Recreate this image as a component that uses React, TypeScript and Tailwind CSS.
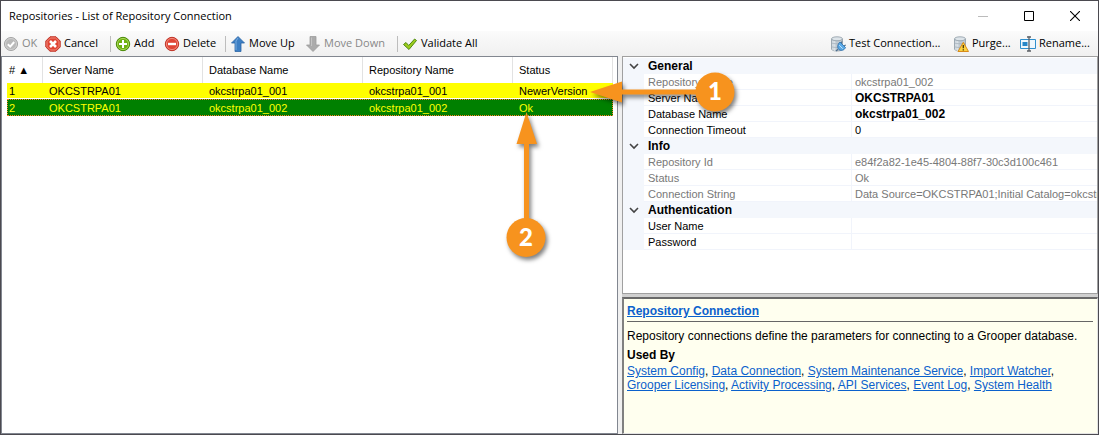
import type { ReactNode } from "react";

const OkIcon = () => (
  <svg width="16" height="16" viewBox="0 0 16 16">
    <circle cx="8" cy="8" r="6.5" fill="#b9b9b9" stroke="#a3a3a3" />
    <circle cx="8" cy="8" r="5.5" fill="none" stroke="#d2d2d2" />
    <path d="M4.8 8.2l2.4 2.4 4-4.6" fill="none" stroke="#fff" strokeWidth="2" />
  </svg>
);

const CancelIcon = () => (
  <svg width="16" height="16" viewBox="0 0 16 16">
    <path d="M5 .8h6L15.200 5v6L11 15.200H5L.8 11V5z" fill="#e04434" stroke="#bf3427" />
    <path d="M5.400 2h5.200L14 5.400v5.200L10.600 14H5.400L2 10.600V5.400z" fill="none" stroke="#f08a7c" />
    <path d="M5 5l6 6M11 5l-6 6" stroke="#fff" strokeWidth="2.600" />
  </svg>
);

const AddIcon = () => (
  <svg width="16" height="16" viewBox="0 0 16 16">
    <circle cx="8" cy="8" r="6.700" fill="#6fb010" stroke="#4a8a08" />
    <circle cx="8" cy="8" r="5.600" fill="none" stroke="#a9d65a" />
    <path d="M8 4v8M4 8h8" stroke="#fff" strokeWidth="2" />
  </svg>
);

const DeleteIcon = () => (
  <svg width="16" height="16" viewBox="0 0 16 16">
    <circle cx="8" cy="8" r="6.700" fill="#e04434" stroke="#bf3427" />
    <circle cx="8" cy="8" r="5.600" fill="none" stroke="#f08a7c" />
    <path d="M4 8h8" stroke="#fff" strokeWidth="2.400" />
  </svg>
);

const UpIcon = () => (
  <svg width="16" height="16" viewBox="0 0 16 16">
    <path d="M8 .5L14.500 7H11v8.500H5V7H1.500z" fill="#3d7fc4" stroke="#2b66a6" strokeWidth=".8" />
    <path d="M8 2L6 5v9" fill="none" stroke="#79acdf" />
  </svg>
);

const DownIcon = () => (
  <svg width="16" height="16" viewBox="0 0 16 16">
    <path d="M8 15.500L1.500 9H5V.5h6V9h3.500z" fill="#ababab" stroke="#9d9d9d" strokeWidth=".8" />
    <path d="M6.500 1.500V10" fill="none" stroke="#c4c4c4" />
  </svg>
);

const ValidateIcon = () => (
  <svg width="16" height="16" viewBox="0 0 16 16">
    <path d="M1.500 8.500L4 6.500l2.700 3L12.600 3l1.900 1.500L7 13.500z" fill="#9ccc1e" stroke="#4f8a10" />
  </svg>
);

const Database = () => (
  <>
    <path d="M1.500 3v10c0 1.300 2.500 2 5.500 2s5.500-.7 5.500-2V3" fill="#bfc9d1" stroke="#8d9aa5" strokeWidth=".8" />
    <path d="M3 4.500v10M4.800 5v10" stroke="#e6ebef" />
    <path d="M1.500 6.800c1 1.300 10 1.300 11 0M1.500 10.500c1 1.300 10 1.300 11 0" fill="none" stroke="#a3afb9" strokeWidth=".8" />
    <ellipse cx="7" cy="2.800" rx="5.500" ry="2" fill="#dde4e9" stroke="#8d9aa5" strokeWidth=".8" />
  </>
);

const TestIcon = () => (
  <svg width="16" height="16" viewBox="0 0 16 16">
    <Database />
    <path d="M6 15l2-1.800M12 5.500l-1 2M15.800 9l-2 1" stroke="#4d6f8f" strokeWidth="1.200" />
    <path d="M10 6l5.500 5.500c-1.200 2.800-4.100 3.600-6.400 2.200C7 12 7.300 8.300 10 6z" fill="#5aa9e6" stroke="#2b6ca8" strokeWidth=".8" />
    <path d="M9.200 9.200l3.500 3.500" stroke="#c5e2f8" />
  </svg>
);

const PurgeIcon = () => (
  <svg width="16" height="16" viewBox="0 0 16 16">
    <Database />
    <path d="M10.300 6.300l5.200 9.200H5z" fill="#fbd340" stroke="#d98b18" strokeLinejoin="round" />
    <path d="M10.300 9v3.300M10.300 13.300v1.300" stroke="#4a3508" strokeWidth="1.300" />
  </svg>
);

const RenameIcon = () => (
  <svg width="16" height="16" viewBox="0 0 16 16">
    <path d="M.5 3.500h15v9H.5z" fill="#eef7fd" stroke="#2f8fcd" />
    <path d="M2.500 6h5v4h-5z" fill="#2586c8" />
    <path d="M7 1h1.500L9 1.500 9.500 1H11M9 1.500v13M7 15h1.500l.5-.5.5.5H11" fill="none" stroke="#5b6066" strokeWidth="1.300" />
  </svg>
);

interface ToolButtonProps {
  icon: ReactNode;
  label: string;
  css?: string;
  disabled?: boolean;
}

const ToolButton = ({ icon, label, css = "", disabled }: ToolButtonProps) => (
  <button
    type="button"
    disabled={disabled}
    className={`flex shrink-0 items-center gap-[3px] whitespace-nowrap disabled:text-[#888] ${css}`}
  >
    {icon}
    <span>{label}</span>
  </button>
);

const Separator = () => <div className="mr-1 h-4 w-px shrink-0 bg-[#bdbdbd]" />;

const rows = [
  { id: 1, server: "OKCSTRPA01", database: "okcstrpa01_001", repository: "okcstrpa01_001", status: "NewerVersion" },
  { id: 2, server: "OKCSTRPA01", database: "okcstrpa01_002", repository: "okcstrpa01_002", status: "Ok" },
];

const RepositoryList = () => (
  <section className="min-w-0 grow basis-0 overflow-hidden border border-[#828790] bg-white pl-[5px]">
    <table className="w-[606px] table-fixed border-separate border-spacing-0 text-left text-[11px] leading-[14px]">
      <colgroup>
        <col className="w-[36px]" />
        <col className="w-[160px]" />
        <col className="w-[160px]" />
        <col className="w-[150px]" />
        <col className="w-[100px]" />
      </colgroup>
      <thead>
        <tr className="h-[26px] [&>th]:border-r [&>th]:border-[#e2e2e2] [&>th]:pl-[6px] [&>th]:font-normal">
          <th className="!pl-[2px]"># ▲</th>
          <th>Server Name</th>
          <th>Database Name</th>
          <th>Repository Name</th>
          <th>Status</th>
        </tr>
      </thead>
      <tbody>
        {rows.map((row) => (
          <tr
            key={row.id}
            className={
              row.id === 2
                ? "h-[17px] bg-[#008000] text-[#ffff00] outline-1 -outline-offset-1 outline-dotted outline-[#ff7f27] [&>td]:pl-[6px]"
                : "h-[16px] bg-[#ffff00] [&>td]:border-b [&>td]:border-white [&>td]:pl-[6px]"
            }
          >
            <td className="!pl-[2px]">{row.id}</td>
            <td>{row.server}</td>
            <td>{row.database}</td>
            <td>{row.repository}</td>
            <td>{row.status}</td>
          </tr>
        ))}
      </tbody>
    </table>
  </section>
);

interface Property {
  name: string;
  value: string;
  readOnly?: boolean;
  changed?: boolean;
}

const categories: { title: string; properties: Property[] }[] = [
  {
    title: "General",
    properties: [
      { name: "Repository Name", value: "okcstrpa01_002", readOnly: true },
      { name: "Server Name", value: "OKCSTRPA01", changed: true },
      { name: "Database Name", value: "okcstrpa01_002", changed: true },
      { name: "Connection Timeout", value: "0" },
    ],
  },
  {
    title: "Info",
    properties: [
      { name: "Repository Id", value: "e84f2a82-1e45-4804-88f7-30c3d100c461", readOnly: true },
      { name: "Status", value: "Ok", readOnly: true },
      {
        name: "Connection String",
        value: "Data Source=OKCSTRPA01;Initial Catalog=okcstrpa01_002",
        readOnly: true,
      },
    ],
  },
  {
    title: "Authentication",
    properties: [
      { name: "User Name", value: "" },
      { name: "Password", value: "" },
    ],
  },
];

const PropertyGrid = () => (
  <section className="h-[238px] overflow-hidden border border-[#a0a0a0] bg-white pt-px">
    <table className="w-full table-fixed border-separate border-spacing-0 text-left text-[11px] leading-[14px]">
      <colgroup>
        <col className="w-[21px]" />
        <col className="w-[208px]" />
        <col />
      </colgroup>
      {categories.map((category) => (
        <tbody key={category.title}>
          <tr className="h-[16px] bg-[#f4f7fc]">
            <td>
              <button type="button" aria-label={`Collapse ${category.title}`} className="flex w-full justify-center">
                <svg width="10" height="8" viewBox="0 0 10 8">
                  <path d="M1 2l4 4 4-4" fill="none" stroke="#444" strokeWidth="1.600" />
                </svg>
              </button>
            </td>
            <th colSpan={2} className="pl-1 text-[12px] font-bold">
              {category.title}
            </th>
          </tr>
          {category.properties.map((property) => (
            <tr
              key={property.name}
              className={property.readOnly ? "h-[16px] text-[#787878]" : "h-[16px]"}
            >
              <td className="bg-[#f4f7fc]" />
              <th className="border-r border-b border-[#f1f4fb] pl-1 font-normal">{property.name}</th>
              <td
                className={`overflow-hidden border-b border-[#f1f4fb] pl-[3px] whitespace-nowrap ${
                  property.changed ? "text-[12px] font-bold" : ""
                }`}
              >
                {property.value}
              </td>
            </tr>
          ))}
        </tbody>
      ))}
    </table>
  </section>
);

const usedBy = [
  "System Config",
  "Data Connection",
  "System Maintenance Service",
  "Import Watcher",
  "Grooper Licensing",
  "Activity Processing",
  "API Services",
  "Event Log",
  "System Health",
];

const HelpPanel = () => (
  <section className="grow border-t-2 border-r border-b border-l-2 border-t-[#696969] border-r-[#e3e3e3] border-b-[#e3e3e3] border-l-[#808080] bg-[#ffffef] px-[3px] text-[12px] leading-[14px]">
    <h2 className="mr-px border-b border-[#666] pt-[5px] pb-[3px] font-bold text-[#0b61cc]">
      <a href="#repository-connection" className="underline">
        Repository Connection
      </a>
    </h2>
    <p className="mt-[7px]">
      Repository connections define the parameters for connecting to a Grooper database.
    </p>
    <h3 className="mt-[5px] font-bold">Used By</h3>
    <p className="mt-[2px]">
      {usedBy.map((name, index) => (
        <span key={name}>
          <a href="#used-by" className="text-[#0b61cc] underline">
            {name}
          </a>
          {index < usedBy.length - 1 ? ", " : ""}
        </span>
      ))}
    </p>
  </section>
);

const Callouts = () => (
  <div className="pointer-events-none absolute -top-px -left-px">
    <svg
      width="750"
      height="270"
      viewBox="0 0 750 270"
      className="drop-shadow-[2px_3px_2px_rgba(0,0,0,0.5)]"
    >
      <g fill="#f7931e">
        <path d="M590 92l32-10.500v8h80v5h-80v8z" />
        <path d="M526.500 112l10.500 32h-8v80h-5v-80h-7.500z" />
        <circle cx="715" cy="92" r="19.500" />
        <circle cx="526" cy="237.500" r="19.500" />
      </g>
    </svg>
    <span className="absolute top-[76px] left-[695px] w-10 text-center font-['Lato'] text-[24px] leading-[30px] font-black text-white">
      1
    </span>
    <span className="absolute top-[222px] left-[506px] w-10 text-center font-['Lato'] text-[24px] leading-[30px] font-black text-white">
      2
    </span>
  </div>
);

const App = () => {
  return (
    <div className="relative flex min-h-screen flex-col border border-[#4b4a50] bg-[#f0f0f0] font-['Liberation_Sans',sans-serif] text-black">
      <header className="flex h-[30px] items-center justify-between bg-white pl-2 font-['Open_Sans',sans-serif]">
        <h1 className="text-[11px]">Repositories - List of Repository Connection</h1>
        <div className="flex">
          <button type="button" aria-label="Minimize" disabled className="flex w-[46px] justify-center">
            <svg width="10" height="10" viewBox="0 0 10 10">
              <path d="M0 5.500h10" stroke="#bbb" />
            </svg>
          </button>
          <button type="button" aria-label="Maximize" className="flex w-[46px] justify-center">
            <svg width="10" height="10" viewBox="0 0 10 10">
              <path d="M.5.5h9v9h-9z" fill="none" stroke="#000" />
            </svg>
          </button>
          <button type="button" aria-label="Close" className="flex w-[46px] justify-center">
            <svg width="10" height="10" viewBox="0 0 10 10">
              <path d="M0 0l10 10M10 0L0 10" stroke="#000" strokeWidth="1.100" />
            </svg>
          </button>
        </div>
      </header>
      <div className="flex h-[25px] items-center justify-between bg-linear-to-b from-[#fbfbfb] to-[#f0f0f0] pr-[6px] pl-[2px] font-['Open_Sans',sans-serif] text-[11px]">
        <div className="flex items-center">
          <ToolButton icon={<OkIcon />} label="OK" css="w-[42px]" disabled />
          <ToolButton icon={<CancelIcon />} label="Cancel" css="w-[65px]" />
          <Separator />
          <ToolButton icon={<AddIcon />} label="Add" css="w-[49px]" />
          <ToolButton icon={<DeleteIcon />} label="Delete" css="w-[61px]" />
          <Separator />
          <ToolButton icon={<UpIcon />} label="Move Up" css="w-[75px]" />
          <ToolButton icon={<DownIcon />} label="Move Down" css="w-[92px]" disabled />
          <Separator />
          <ToolButton icon={<ValidateIcon />} label="Validate All" />
        </div>
        <div className="flex items-center">
          <ToolButton icon={<TestIcon />} label="Test Connection..." css="w-[123px]" />
          <ToolButton icon={<PurgeIcon />} label="Purge..." css="w-[67px]" />
          <ToolButton icon={<RenameIcon />} label="Rename..." css="w-[72px]" />
        </div>
      </div>
      <main className="flex grow gap-1">
        <RepositoryList />
        <div className="flex w-[476px] shrink-0 flex-col gap-[3px] bg-[#d0d0d0]">
          <PropertyGrid />
          <HelpPanel />
        </div>
      </main>
      <Callouts />
    </div>
  );
};

export default App;
